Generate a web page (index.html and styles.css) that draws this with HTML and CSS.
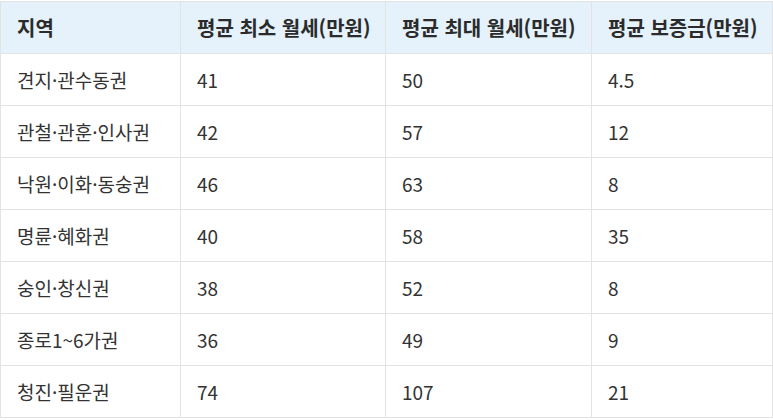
FILE: index.html
```html
<!DOCTYPE html>
<html lang="ko">
<head>
<meta charset="utf-8">
<link rel="stylesheet" href="styles.css">
</head>
<body>
<table class="rent">
  <thead>
    <tr><th class="c1">지역</th><th class="c2">평균 최소 월세(만원)</th><th class="c3">평균 최대 월세(만원)</th><th class="c4">평균 보증금(만원)</th></tr>
  </thead>
  <tbody>
    <tr><td>견지·관수동권</td><td>41</td><td>50</td><td>4.5</td></tr>
    <tr><td>관철·관훈·인사권</td><td>42</td><td>57</td><td>12</td></tr>
    <tr><td>낙원·이화·동숭권</td><td>46</td><td>63</td><td>8</td></tr>
    <tr><td>명륜·혜화권</td><td>40</td><td>58</td><td>35</td></tr>
    <tr><td>숭인·창신권</td><td>38</td><td>52</td><td>8</td></tr>
    <tr><td>종로1~6가권</td><td>36</td><td>49</td><td>9</td></tr>
    <tr><td>청진·필운권</td><td>74</td><td>107</td><td>21</td></tr>
  </tbody>
</table>
</body>
</html>
```
FILE: styles.css
```css
html, body {
  margin: 0;
  padding: 0;
  background: #ffffff;
}
body {
  padding: 1px 0 0 0;
  font-family: "Noto Sans CJK KR", "Noto Sans", sans-serif;
  color: #333333;
}
.rent {
  border-collapse: collapse;
  width: 772px;
  table-layout: fixed;
  font-size: 19px;
}
.rent th, .rent td {
  border: 1px solid #e3e3e3;
  height: 52px;
  padding: 0 16px;
  text-align: left;
  vertical-align: middle;
  box-sizing: border-box;
  white-space: nowrap;
}
.rent th {
  background: #e5f1fb;
  font-weight: 700;
  font-size: 20px;
  color: #2b2b2b;
}
.rent td {
  font-weight: 400;
}
.c1 { width: 180px; }
.c2 { width: 205px; }
.c3 { width: 206px; }
.c4 { width: 181px; }
```
